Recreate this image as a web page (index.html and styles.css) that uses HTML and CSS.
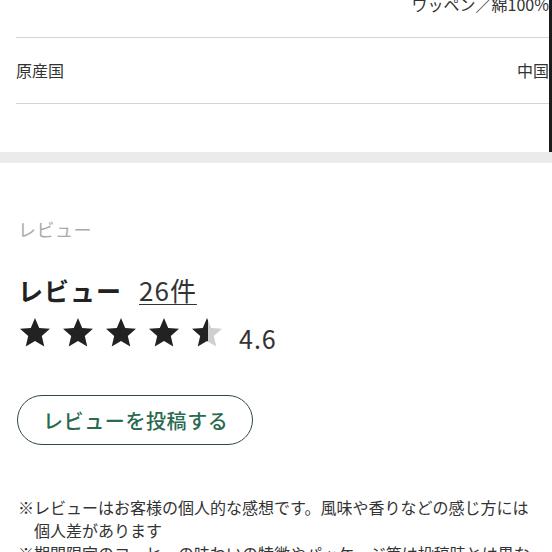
FILE: index.html
```html
<!DOCTYPE html>
<html lang="ja">
<head>
<meta charset="utf-8">
<link rel="stylesheet" href="styles.css">
</head>
<body>
<div class="spec">
  <div class="spec-row first">
    <span class="spec-label"></span>
    <span class="spec-value">ワッペン／綿100%</span>
  </div>
  <div class="spec-row">
    <span class="spec-label">原産国</span>
    <span class="spec-value">中国</span>
  </div>
</div>
<div class="band"></div>
<section class="review">
  <div class="review-label">レビュー</div>
  <div class="review-head">
    <span class="review-title">レビュー</span>
    <a class="review-count">26件</a>
  </div>
  <div class="rating">
    <svg class="star" viewBox="0 0 24 24"><path d="M12 17.27L18.18 21l-1.64-7.03L22 9.24l-7.19-.61L12 2 9.19 8.63 2 9.24l5.46 4.73L5.82 21z" fill="#222"/></svg>
    <svg class="star" viewBox="0 0 24 24"><path d="M12 17.27L18.18 21l-1.64-7.03L22 9.24l-7.19-.61L12 2 9.19 8.63 2 9.24l5.46 4.73L5.82 21z" fill="#222"/></svg>
    <svg class="star" viewBox="0 0 24 24"><path d="M12 17.27L18.18 21l-1.64-7.03L22 9.24l-7.19-.61L12 2 9.19 8.63 2 9.24l5.46 4.73L5.82 21z" fill="#222"/></svg>
    <svg class="star" viewBox="0 0 24 24"><path d="M12 17.27L18.18 21l-1.64-7.03L22 9.24l-7.19-.61L12 2 9.19 8.63 2 9.24l5.46 4.73L5.82 21z" fill="#222"/></svg>
    <svg class="star" viewBox="0 0 24 24"><defs><linearGradient id="half" x1="0" x2="1" y1="0" y2="0"><stop offset="0.52" stop-color="#222"/><stop offset="0.52" stop-color="#cfcfcf"/></linearGradient></defs><path d="M12 17.27L18.18 21l-1.64-7.03L22 9.24l-7.19-.61L12 2 9.19 8.63 2 9.24l5.46 4.73L5.82 21z" fill="url(#half)"/></svg>
    <span class="score">4.6</span>
  </div>
  <button class="post-btn">レビューを投稿する</button>
  <ul class="notes">
    <li>※レビューはお客様の個人的な感想です。風味や香りなどの感じ方には個人差があります</li>
    <li>※期間限定のコーヒーの味わいの特徴やパッケージ等は投稿時とは異なる場合があります</li>
  </ul>
</section>
</body>
</html>
```

FILE: styles.css
```css
* { box-sizing: border-box; }
html, body { margin: 0; padding: 0; background: #fff; }
body {
  width: 552px;
  height: 552px;
  overflow: hidden;
  font-family: "Noto Sans CJK JP", "Noto Sans", sans-serif;
  color: #333;
}
.spec {
  display: flow-root;
  width: 552px;
  padding-left: 16px;
  border-right: 3px solid #1c1c1c;
  height: 152px;
  overflow: hidden;
}
.spec-row {
  display: flex;
  justify-content: space-between;
  align-items: center;
  border-bottom: 1px solid #d4d4d4;
  padding: 21px 0 22px;
  font-size: 16px;
  line-height: 22px;
}
.spec-row.first {
  margin-top: -7px;
  padding: 0 0 22px;
}
.spec-value { color: #333; }
.band {
  height: 11px;
  background: #ebebeb;
}
.review {
  padding: 53px 22px 0 18px;
}
.review-label {
  font-size: 18px;
  line-height: 26px;
  color: #aaa;
  letter-spacing: 0.5px;
}
.review-head {
  display: flex;
  align-items: baseline;
  gap: 17px;
  margin-top: 31px;
  line-height: 34px;
}
.review-title {
  font-size: 25px;
  font-weight: 700;
  color: #222;
  letter-spacing: 1px;
}
.review-count {
  font-size: 26px;
  color: #333;
  letter-spacing: 1px;
  text-decoration: underline;
  text-underline-offset: 3px;
  text-decoration-thickness: 1px;
}
.rating {
  display: flex;
  align-items: center;
  gap: 7px;
  margin-top: 8px;
  margin-left: -1px;
}
.star {
  width: 36px;
  height: 36px;
  display: block;
}
.score {
  font-size: 25px;
  line-height: 25px;
  letter-spacing: 1px;
  color: #333;
  margin-left: 7px;
  margin-top: 11px;
}
.post-btn {
  display: block;
  margin: 44px 0 0 -1px;
  height: 50px;
  padding: 0 24px 0 25px;
  border: 1.5px solid #2f4a40;
  border-radius: 25px;
  background: #fff;
  color: #2a6a50;
  font-family: "Noto Sans CJK JP", "Noto Sans", sans-serif;
  font-size: 20px;
  font-weight: 500;
  letter-spacing: 0.6px;
}
.notes {
  list-style: none;
  margin: 51px 0 0;
  padding: 0;
  font-size: 16px;
  line-height: 23px;
  color: #333;
}
.notes li {
  padding-left: 16px;
  text-indent: -16px;
}
```
